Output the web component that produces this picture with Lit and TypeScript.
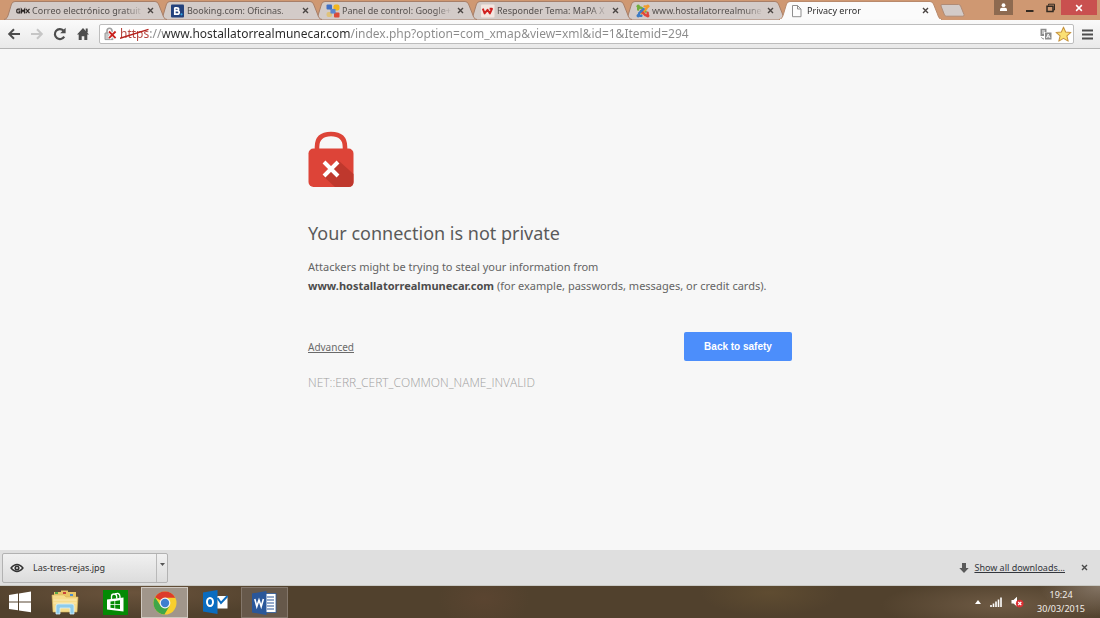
import { LitElement, html, css, svg, TemplateResult } from "lit";
import { customElement, property } from "lit/decorators.js";
import { classMap } from "lit/directives/class-map.js";

/* ---------- favicons ---------- */

const favicons: Record<string, TemplateResult> = {
  gmx: html`<svg width="14" height="14" viewBox="0 0 14 14" aria-hidden="true">
    <g fill="none" stroke="#2b2523" stroke-width="1.2">
      <path d="M4.2 5.1H2Q.8 5.1 .8 6.2V7.7Q.8 8.9 2 8.9H3.8V7H2.4" />
      <path d="M5.4 9.4V5.2L7 7.6L8.6 5.2V9.4" />
      <path d="M9.8 4.8L13.5 9.2M13.5 4.8L9.8 9.2" />
    </g>
  </svg>`,
  booking: html`<svg width="14" height="14" viewBox="0 0 14 14" aria-hidden="true">
    <rect y="0.5" width="13" height="13" rx="1" fill="#24427d" />
    <path d="M3.5 3.8H5.8Q7.6 3.8 7.6 5.2T5.8 6.7H3.8H6.2Q8.2 6.7 8.2 8.4T6.2 10.2H3.8V3.8" fill="none" stroke="#fff" stroke-width="1.7" />
    <circle cx="10.5" cy="10.3" r="1.1" fill="#2fa3e0" />
  </svg>`,
  google: html`<svg width="14" height="14" viewBox="0 0 14 14" aria-hidden="true">
    <path d="M4 4L10 10M10 4L4 10" stroke="#8f9bb8" stroke-width="2.4" />
    <rect x="0.5" y="0.5" width="5.5" height="5" rx="1" fill="#3f6fc4" />
    <rect x="7.5" y="0.5" width="6" height="6" rx="2" fill="#f0b51f" />
    <rect x="0.5" y="8" width="5.5" height="5" rx="2" fill="#dfc27a" />
    <rect x="8" y="8.5" width="5.5" height="5" rx="1" fill="#dd4a38" />
    <rect x="4.5" y="5" width="5" height="4.5" fill="#5d86cf" />
  </svg>`,
  webmaster: html`<svg width="14" height="14" viewBox="0 0 14 14" aria-hidden="true">
    <rect y="0.5" width="13.5" height="13" rx="1" fill="#f3e6e0" />
    <path d="M1.8 4.6L3.6 9.4L6.5 5.8L8.9 9.4L11 4.8H8.6" fill="none" stroke="#d1201f" stroke-width="1.9" stroke-linejoin="round" />
  </svg>`,
  joomla: html`<svg width="14" height="14" viewBox="0 0 14 14" aria-hidden="true">
    <g fill="none" stroke-width="2.4" stroke-linecap="round">
      <path d="M2.2 5.5V4.2Q4.5 2.5 6.5 4.6L9.6 7.6" stroke="#6fae3c" />
      <path d="M8.5 2.4Q11.5 2 10.6 4.4L5.6 9.4" stroke="#f29b2c" />
      <path d="M11.6 8.6Q12.4 12.4 9.4 11.2L5 6.8" stroke="#e0463b" />
      <path d="M5.4 11.7Q2 12.4 3.2 9.2L7.6 5" stroke="#3d7cc4" />
    </g>
    <circle cx="2.2" cy="2.3" r="1.7" fill="#6fae3c" />
    <circle cx="11.8" cy="2.3" r="1.7" fill="#f29b2c" />
    <circle cx="11.8" cy="11.8" r="1.7" fill="#e0463b" />
    <circle cx="2.2" cy="11.8" r="1.7" fill="#3d7cc4" />
  </svg>`,
  page: html`<svg width="14" height="14" viewBox="0 0 14 14" aria-hidden="true">
    <path d="M1.5 1.5H6.5L10 5V12.7H1.5Z" fill="#fdfdfd" stroke="#8f8f8f" />
    <path d="M6.5 1.5V5H10" fill="none" stroke="#8f8f8f" />
  </svg>`,
};

const cross = (size: number, color: string, width: number) => html`<svg
  width=${size} height=${size} viewBox="0 0 7 7" aria-hidden="true">
  <path d="M1 1L6 6M6 1L1 6" stroke=${color} stroke-width=${width} />
</svg>`;

/* ---------- one tab ---------- */

@customElement("browser-tab")
export class BrowserTab extends LitElement {
  @property() icon = "page";
  @property() label = "";
  @property({ type: Boolean }) active = false;

  static styles = css`
    :host {
      display: grid;
      flex: 0 1 163px;
      min-width: 60px;
      margin-right: -8px;
      height: 20px;
      position: relative;
    }
    .shape, .body { grid-area: 1 / 1; }
    .shape { width: 100%; height: 20px; display: block; }
    .body {
      display: flex;
      align-items: center;
      gap: 2px;
      padding: 1px 11px 0 12px;
      min-width: 0;
      font-size: 9px;
      line-height: 18px;
      color: #55504e;
    }
    .body.active { color: #2d2d2d; }
    .label {
      flex: 1;
      min-width: 0;
      overflow: hidden;
      white-space: nowrap;
      mask-image: linear-gradient(to right, #000 calc(100% - 18px), transparent);
    }
    svg { flex: none; }
    button {
      border: 0;
      padding: 0;
      background: none;
      display: grid;
      place-items: center;
      width: 11px;
      height: 12px;
    }
  `;

  render() {
    return html`
      <svg class="shape" viewBox="0 0 163 20" preserveAspectRatio="none" aria-hidden="true">
        <path
          d="M0 19.5C3 19 3.5 17 4.5 14L7.5 4Q8.5 1.5 11 1.5H151Q153.5 1.5 154.5 4L158.5 14C159.5 17 160 19 163 19.5V20H0Z"
          fill=${this.active ? "#fbfbfb" : "#d3cbc8"}
          stroke=${this.active ? "#b98a6c" : "#a87f68"}
          stroke-width="1"
        />
        ${this.active ? svg`<path d="M1 19.6H162" stroke="#fafafa" stroke-width="1.2"/>` : ""}
      </svg>
      <div class=${classMap({ body: true, active: this.active })}>
        ${favicons[this.icon]}
        <span class="label">${this.label}</span>
        <button aria-label="Close tab">${cross(7, "#4a4543", 1.4)}</button>
      </div>
    `;
  }
}

/* ---------- whole window ---------- */

const tabs = [
  { icon: "gmx", label: "Correo electrónico gratuit" },
  { icon: "booking", label: "Booking.com: Oficinas." },
  { icon: "google", label: "Panel de control: Google+" },
  { icon: "webmaster", label: "Responder Tema: MaPA X" },
  { icon: "joomla", label: "www.hostallatorrealmune" },
  { icon: "page", label: "Privacy error" },
];

const apps = [
  {
    name: "Start", state: "",
    art: html`<svg width="24" height="24" viewBox="0 0 24 24" aria-hidden="true">
      <path d="M1 5L10 3.6V11.4H1ZM11 3.4L23 1.6V11.4H11ZM1 12.5H10V20.3L1 19ZM11 12.5H23V22.2L11 20.5Z" fill="#fff" />
    </svg>`,
  },
  {
    name: "File Explorer", state: "",
    art: html`<svg width="28" height="26" viewBox="0 0 28 26" aria-hidden="true">
      <path d="M3 3H10V1.5H17V3H25V8H3Z" fill="#e9c566" />
      <rect x="4" y="3" width="3" height="2" fill="#5aa84a" />
      <rect x="12" y="3" width="3" height="2" fill="#c9423a" />
      <rect x="19" y="5" width="3" height="2" fill="#4b8fd0" />
      <path d="M1 6H13L15 8H27L26 23H2Z" fill="#f6dc8c" stroke="#d9b65a" stroke-width=".6" />
      <path d="M2.5 11H25.5M2.5 14H25.5" stroke="#fbeab5" />
      <path d="M5 25V17Q5 15 7 15H21Q23 15 23 17V25H19V19H9V25Z" fill="#8ecbea" stroke="#d9f1fb" stroke-width=".8" />
    </svg>`,
  },
  {
    name: "Store", state: "",
    art: html`<svg width="25" height="25" viewBox="0 0 25 25" aria-hidden="true">
      <rect width="25" height="25" fill="#048a04" />
      <path d="M4 9.5L20.5 7.5V21.5L4 19.5Z" fill="#fff" />
      <path d="M8.5 9V6.5Q8.5 4 11 4T13.7 6.5V8.5M12 5Q13 3 15 3.5T17 6.5V8" fill="none" stroke="#fff" stroke-width="1.3" />
      <path d="M7.5 11.5L11.4 11V14.2H7.5ZM12.2 10.9L17 10.3V14.2H12.2ZM7.5 15H11.4V18.3L7.5 17.8ZM12.2 15H17V19L12.2 18.4Z" fill="#048a04" />
    </svg>`,
  },
  {
    name: "Google Chrome", state: "current",
    art: html`<svg width="24" height="24" viewBox="0 0 24 24" aria-hidden="true">
      <circle cx="12" cy="12" r="11.5" fill="#f7cf2e" />
      <path d="M12 12L2.04 6.25A11.5 11.5 0 0 1 21.96 6.25L22.2 6.8H12Z" fill="#dc3b2c" />
      <path d="M12 12L7.4 14.6L2.04 6.25A11.5 11.5 0 0 0 11.4 23.5L16.6 14.8Z" fill="#3fa648" />
      <circle cx="12" cy="12" r="5.4" fill="#f4f4f4" />
      <circle cx="12" cy="12" r="4.2" fill="#3f7fd0" />
    </svg>`,
  },
  {
    name: "Outlook", state: "",
    art: html`<svg width="25" height="24" viewBox="0 0 25 24" aria-hidden="true">
      <path d="M0 2.5L14.5 0V24L0 21.5Z" fill="#0a6cc0" />
      <ellipse cx="7" cy="12" rx="3" ry="4" fill="none" stroke="#fff" stroke-width="2" />
      <rect x="14.5" y="6" width="10" height="12.5" fill="#fff" />
      <path d="M14.5 8L18 13L24.5 6" fill="none" stroke="#0a6cc0" stroke-width="2" />
    </svg>`,
  },
  {
    name: "Word", state: "open",
    art: html`<svg width="25" height="24" viewBox="0 0 25 24" aria-hidden="true">
      <rect x="13" y="2.5" width="11" height="19" fill="#fff" stroke="#2a579a" stroke-width=".8" />
      <path d="M15 6H22M15 9H22M15 12H22M15 15H22M15 18H22" stroke="#2a579a" stroke-width="1.2" />
      <path d="M0 2.5L14.5 0V24L0 21.5Z" fill="#2a579a" />
      <path d="M2.8 8L4.8 15.5L7 9L9.2 15.5L11.4 8" fill="none" stroke="#fff" stroke-width="1.6" />
    </svg>`,
  },
];

@customElement("app-root")
export class AppRoot extends LitElement {
  static styles = css`
    :host {
      display: flex;
      flex-direction: column;
      min-height: 100vh;
      background: #f7f7f7;
      font-family: "Noto Sans", "Open Sans", sans-serif;
      color: #646464;
    }
    button { font: inherit; border: 0; padding: 0; background: none; color: inherit; display: grid; place-items: center; }
    svg { flex: none; display: block; }

    .strip { display: flex; height: 20px; background: #cf9872; padding-left: 4px; }
    .tabs { display: flex; flex: 0 1 930px; min-width: 0; }
    .t0 { z-index: 6; } .t1 { z-index: 5; } .t2 { z-index: 4; }
    .t3 { z-index: 3; } .t4 { z-index: 2; } .t5 { z-index: 7; }
    .newtab { margin: 4px 0 0 6px; align-self: flex-start; }
    .window { display: flex; margin-left: auto; align-self: flex-start; padding-right: 3px; }
    .window button { width: 21px; height: 15px; }
    .window .user { width: 19px; background: #8e6a50; margin-right: 6px; }
    .window .close { width: 36px; background: #c9504f; }

    .toolbar {
      display: flex;
      align-items: center;
      gap: 8px;
      height: 28px;
      padding: 0 7px 0 6px;
      background: linear-gradient(#fafafa, #e9e9e9);
      border-bottom: 1px solid #b4b4b4;
    }
    .nav { display: flex; gap: 7px; }
    .nav button { width: 16px; height: 20px; }
    .omnibox {
      flex: 1;
      min-width: 0;
      display: flex;
      align-items: center;
      gap: 3px;
      height: 20px;
      padding: 0 1px 0 4px;
      background: #fff;
      border: 1px solid #bdbdbd;
      border-radius: 2px;
      box-sizing: border-box;
    }
    .field { flex: 1; min-width: 0; display: grid; align-items: center; justify-items: start; }
    .field > * { grid-area: 1 / 1; }
    .url {
      width: 100%;
      border: 0;
      padding: 0;
      outline: 0;
      font: 12px/18px "Noto Sans", "Open Sans", sans-serif;
      color: transparent;
      background: linear-gradient(to right, #b5433c 30px, #8a8a8a 30px, #8a8a8a 43px, #2a2a2a 43px, #2a2a2a 231px, #8a8a8a 231px);
      background-clip: text;
      -webkit-background-clip: text;
    }
    .strike { pointer-events: none; }

    main {
      flex: 1;
      width: 484px;
      max-width: calc(100% - 32px);
      margin: 0 auto;
      padding-top: 82px;
      box-sizing: border-box;
    }
    h1 { margin: 33px 0 0; font-size: 18px; line-height: 24px; font-weight: 400; color: #5a5a5a; }
    p { margin: 12px 0 0; font-size: 11px; line-height: 19px; }
    b { color: #4c4c4c; }
    .actions { display: flex; justify-content: space-between; align-items: center; margin-top: 37px; }
    .actions a { font-size: 10px; line-height: 16px; color: #6a6a6a; }
    .actions .safe {
      width: 108px;
      height: 29px;
      border-radius: 2px;
      background: #4c8efb;
      color: #fff;
      font: 700 10px/14px "Liberation Sans", sans-serif;
    }
    .code { color: #a0a0a0; font-family: "Open Sans", sans-serif; font-weight: 300; font-size: 12px; line-height: 20px; }

    .shelf {
      display: flex;
      align-items: center;
      height: 36px;
      padding: 0 10px 0 2px;
      background: #dfdfdf;
      color: #333;
      font-size: 9px;
      line-height: 14px;
      box-sizing: border-box;
      border-bottom: 1px solid #c9c9c4;
    }
    .item {
      display: flex;
      width: 166px;
      height: 30px;
      box-sizing: border-box;
      border: 1px solid #b2b2b2;
      border-radius: 2px;
      background: linear-gradient(#f1f1f1, #dcdcdc);
    }
    .item .file { flex: 1; display: flex; align-items: center; gap: 9px; padding-left: 7px; }
    .item .more { width: 11px; border-left: 1px solid #b9b9b9; padding-bottom: 7px; }
    .all { display: flex; align-items: center; gap: 5px; margin-left: auto; }
    .all a { color: #33363c; }
    .shelf .dismiss { width: 11px; height: 12px; margin-left: 14px; }

    .taskbar {
      display: flex;
      align-items: center;
      height: 32px;
      color: #f3efea;
      background:
        radial-gradient(ellipse 60px 30px at 100% 0, #857565, transparent),
        radial-gradient(ellipse 120px 26px at 91% 60%, #6e5a44 0, transparent),
        radial-gradient(ellipse 46px 30px at 44% 40%, #64483480, transparent),
        radial-gradient(ellipse 70px 24px at 70% 20%, #5f4c31, transparent),
        radial-gradient(ellipse 160px 24px at 12% 20%, #6a533c, transparent),
        #51412d;
    }
    .apps { display: flex; }
    .apps button { width: 50px; height: 32px; box-sizing: border-box; }
    .apps button:first-child { width: 40px; }
    .apps .current, .apps .open { width: 47px; height: 31px; margin: 1px 2px 0 1px; border: 1px solid #83766a; background: #66584a; }
    .apps .current { border-color: #cfc8c0; background: #a1968b; }
    .tray { display: flex; align-items: center; gap: 9px; margin-left: auto; padding-right: 15px; }
    time { display: grid; text-align: center; font-size: 9px; line-height: 14px; margin-left: 4px; }
  `;

  render() {
    return html`
      <div class="strip">
        <nav class="tabs" aria-label="Tabs">
          ${tabs.map((t, i) => html`<browser-tab class="t${i}" .icon=${t.icon} .label=${t.label}
            ?active=${i === tabs.length - 1}></browser-tab>`)}
        </nav>
        <button class="newtab" aria-label="New tab">
          <svg width="25" height="13" viewBox="0 0 25 13"><path d="M1 2Q.5.5 2 .5H18.5Q20 .5 20.6 2L24 10.5Q24.3 12.2 23 12.2H6.5Q5 12.2 4.5 11Z" fill="#d3cbc8" stroke="#b08b75" /></svg>
        </button>
        <div class="window">
          <button class="user" aria-label="Profile">
            <svg width="9" height="9" viewBox="0 0 9 9"><circle cx="4.5" cy="2.2" r="1.9" fill="#fff" /><path d="M1 8V6.5Q1 5 3 4.8H6Q8 5 8 6.5V8Z" fill="#fff" /></svg>
          </button>
          <button aria-label="Minimize"><svg width="8" height="8" viewBox="0 0 8 8"><path d="M0 7H7.5" stroke="#332a22" stroke-width="2" /></svg></button>
          <button aria-label="Restore"><svg width="10" height="10" viewBox="0 0 10 10" fill="none" stroke="#332a22"><path d="M2.5 2.5V1.2H8.5V7H7" /><path d="M1 3.2H7V8.5H1Z" stroke-width="1.5" /></svg></button>
          <button class="close" aria-label="Close">${cross(8, "#fff", 1.3)}</button>
        </div>
      </div>

      <div class="toolbar">
        <div class="nav">
          <button aria-label="Back"><svg width="14" height="12" viewBox="0 0 14 12" fill="none" stroke="#4d4d4d" stroke-width="2"><path d="M13 6H2.5M7 1.2L2.2 6L7 10.8" /></svg></button>
          <button aria-label="Forward"><svg width="14" height="12" viewBox="0 0 14 12" fill="none" stroke="#c6c6c6" stroke-width="2"><path d="M1 6H11.5M7 1.2L11.8 6L7 10.8" /></svg></button>
          <button aria-label="Reload"><svg width="14" height="14" viewBox="0 0 14 14"><path d="M11.2 9.6A5 5 0 1 1 10.4 3.5" fill="none" stroke="#4d4d4d" stroke-width="2.2" /><path d="M12.6.8V6.2H7.2Z" fill="#4d4d4d" /></svg></button>
          <button aria-label="Home"><svg width="14" height="14" viewBox="0 0 14 14" fill="#4d4d4d"><path d="M7 1L13 7.6H11.3V13H8.3V9.2H5.7V13H2.7V7.6H1Z" /><rect x="9.7" y="1.5" width="2" height="4" /></svg></button>
        </div>
        <div class="omnibox">
          <svg width="13" height="14" viewBox="0 0 13 14" aria-hidden="true">
            <path d="M3 6V4Q3 1.3 5.5 1.3T8 4V6" fill="none" stroke="#a0a0a0" stroke-width="1.6" />
            <path d="M1 6H9V12.6H1Z" fill="#c9c9c9" stroke="#9b9b9b" />
            <path d="M5 4.5L11.6 11.2M11.6 4.5L5 11.2" stroke="#fff" stroke-width="3.4" />
            <path d="M5 4.5L11.6 11.2M11.6 4.5L5 11.2" stroke="#c9211e" stroke-width="1.8" />
          </svg>
          <div class="field">
            <input class="url" aria-label="Address" spellcheck="false"
              value="https://www.hostallatorrealmunecar.com/index.php?option=com_xmap&view=xml&id=1&Itemid=294" />
            <svg class="strike" width="29" height="12" viewBox="0 0 29 12" aria-hidden="true"><path d="M0 10.2L28.5 1.4" stroke="#b5201b" stroke-width="1.5" /></svg>
          </div>
          <svg width="12" height="12" viewBox="0 0 12 12" aria-hidden="true">
            <path d="M.5.8H6.5V4H4V8H.5Z" fill="#8b8b8b" />
            <path d="M2 3H5M2 5H4" stroke="#fff" />
            <rect x="5" y="4.5" width="6.5" height="7" fill="#8b8b8b" />
            <path d="M6.5 10L8.2 6L10 10M7 8.8H9.5" fill="none" stroke="#fff" stroke-width=".9" />
            <path d="M1.5 9.3Q2 11 4 11" fill="none" stroke="#8b8b8b" />
          </svg>
          <svg width="17" height="16" viewBox="0 0 16 15" aria-hidden="true">
            <path d="M8 1L10 5.6L15 6L11.2 9.3L12.4 14.2L8 11.6L3.6 14.2L4.8 9.3L1 6L6 5.6Z" fill="#fbe073" stroke="#c79440" stroke-linejoin="round" />
          </svg>
        </div>
        <button aria-label="Menu"><svg width="11" height="11" viewBox="0 0 11 11"><path d="M0 1.5H11M0 5.5H11M0 9.5H11" stroke="#4d4d4d" stroke-width="2.2" /></svg></button>
      </div>

      <main>
        <svg width="46" height="57" viewBox="0 0 46 57" aria-hidden="true">
          <path d="M9 19V16Q9 3 23 3T37 16V19" fill="none" stroke="#dd4438" stroke-width="4.6" />
          <rect x=".5" y="17.5" width="45" height="38.5" rx="5" fill="#dd4438" />
          <path d="M31 30L45.5 43V51Q45.5 56 40.5 56H27L15 45Z" fill="#bf382d" />
          <path d="M16 31L30 45M30 31L16 45" stroke="#fff" stroke-width="4" />
        </svg>
        <h1>Your connection is not private</h1>
        <p>Attackers might be trying to steal your information from<br />
          <b>www.hostallatorrealmunecar.com</b> (for example, passwords, messages, or credit cards).</p>
        <div class="actions">
          <a href="#advanced">Advanced</a>
          <button class="safe">Back to safety</button>
        </div>
        <p class="code">NET::ERR_CERT_COMMON_NAME_INVALID</p>
      </main>

      <div class="shelf">
        <div class="item">
          <button class="file">
            <svg width="14" height="10" viewBox="0 0 14 10" aria-hidden="true"><path d="M1 5Q7-2 13 5Q7 12 1 5Z" fill="#f2f2f2" stroke="#333" stroke-width="1.3" /><circle cx="7" cy="5" r="2.6" fill="#333" /><circle cx="7" cy="5" r="1" fill="#ddd" /></svg>
            <span>Las-tres-rejas.jpg</span>
          </button>
          <button class="more" aria-label="Download options"><svg width="5" height="3" viewBox="0 0 5 3"><path d="M0 0H5L2.5 3Z" fill="#555" /></svg></button>
        </div>
        <div class="all">
          <svg width="10" height="10" viewBox="0 0 10 10" aria-hidden="true"><path d="M3 0H7V5H9.7L5 10L.3 5H3Z" fill="#5a5a5a" /></svg>
          <a href="#downloads">Show all downloads...</a>
        </div>
        <button class="dismiss" aria-label="Close downloads bar">${cross(7, "#4a4a4a", 1.4)}</button>
      </div>

      <footer class="taskbar">
        <div class="apps">
          ${apps.map((a) => html`<button class=${a.state} aria-label=${a.name}>${a.art}</button>`)}
        </div>
        <div class="tray">
          <svg width="6" height="4" viewBox="0 0 6 4" aria-hidden="true"><path d="M0 4L3 0L6 4Z" fill="#fff" /></svg>
          <svg width="12" height="10" viewBox="0 0 12 10" aria-hidden="true"><path d="M1 10V8M3.5 10V6.5M6 10V4.5M8.5 10V2.5M11 10V.5" stroke="#fff" stroke-width="1.6" /></svg>
          <svg width="13" height="12" viewBox="0 0 13 12" aria-hidden="true"><path d="M.5 4H2.5L6 .8V10.5L2.5 7.6H.5Z" fill="#fff" /><circle cx="8.7" cy="7.6" r="3.8" fill="#dc2f33" /><path d="M7.2 6L10.3 9.2M10.3 6L7.2 9.2" stroke="#fff" stroke-width="1.2" /></svg>
          <time><span>19:24</span><span>30/03/2015</span></time>
        </div>
      </footer>
    `;
  }
}
